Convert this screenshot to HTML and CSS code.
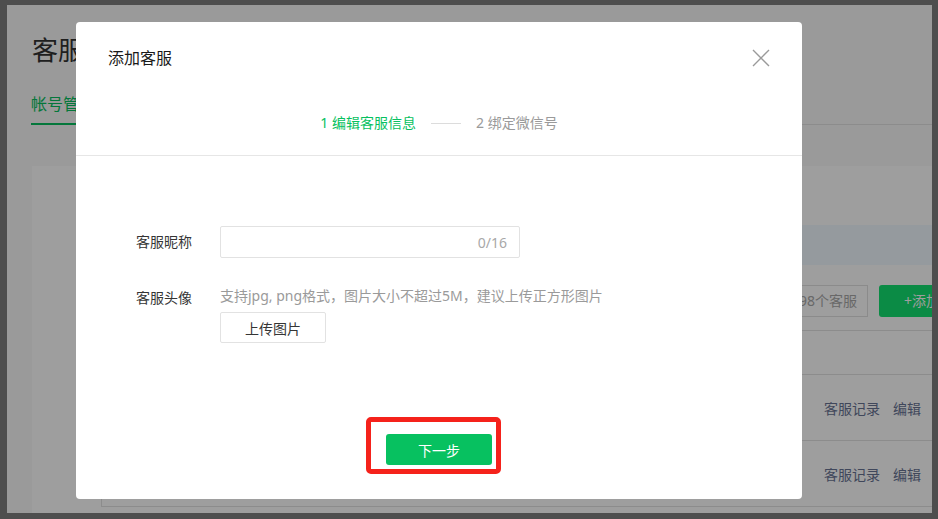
FILE: index.html
```html
<!DOCTYPE html>
<html lang="zh-CN">
<head>
<meta charset="utf-8">
<title>添加客服</title>
<link rel="stylesheet" href="styles.css">
</head>
<body>
<div class="frame">
  <div class="screen">
    <div class="page">
      <h1 class="page-title">客服</h1>
      <div class="tabs"><div class="tab active">帐号管理</div></div>
      <div class="card">
        <div class="table">
          <div class="card-top"></div>
          <div class="band"></div>
          <div class="toolbar">
            <div class="quota">还可添加98个客服</div>
            <div class="add-btn">+添加客服</div>
          </div>
          <div class="thead"></div>
          <div class="row"><span class="link">客服记录</span><span class="link">编辑</span></div>
          <div class="row"><span class="link">客服记录</span><span class="link">编辑</span></div>
        </div>
      </div>
    </div>
    <div class="mask"></div>
    <div class="dialog">
      <div class="dialog-head">
        <div class="dialog-title">添加客服</div>
        <div class="steps">
          <span class="step current">1 编辑客服信息</span>
          <span class="step-line"></span>
          <span class="step">2 绑定微信号</span>
        </div>
        <button class="close" aria-label="关闭">
          <svg width="18" height="18" viewBox="0 0 18 18"><path d="M1 1L17 17M17 1L1 17" stroke="#9a9a9a" stroke-width="1.4" fill="none"/></svg>
        </button>
      </div>
      <div class="dialog-body">
        <div class="form-row">
          <label class="form-label">客服昵称</label>
          <div class="input"><span class="counter">0/16</span></div>
        </div>
        <div class="form-row second">
          <label class="form-label tall">客服头像</label>
          <div class="field">
            <div class="hint">支持jpg, png格式，图片大小不超过5M，建议上传正方形图片</div>
            <button class="upload">上传图片</button>
          </div>
        </div>
      </div>
      <div class="dialog-foot">
        <div class="next-wrap">
          <button class="next">下一步</button>
          <span class="highlight"></span>
        </div>
      </div>
    </div>
  </div>
</div>
</body>
</html>
```
FILE: styles.css
```css
* { box-sizing: border-box; }
html, body { margin: 0; padding: 0; }
body {
  background: #4e4e4e;
  font-family: "Noto Sans", "Noto Sans CJK SC", sans-serif;
  font-size: 14px;
  color: #353535;
}
.frame {
  padding: 5px 6px 6px 7px;
  width: 938px;
  height: 519px;
}
.screen {
  position: relative;
  width: 925px;
  height: 508px;
  overflow: hidden;
  background: #f8f8f8;
}
.page {
  width: 1010px;
  padding: 27px 0 0 25px;
}
.page-title {
  margin: 0;
  font-size: 26px;
  line-height: 36px;
  font-weight: 400;
  color: #333;
}
.tabs {
  margin-top: 24px;
  display: flex;
  border-bottom: 1px solid #e3e3e3;
}
.tab {
  font-size: 16px;
  line-height: 24px;
  padding: 0 0 7px;
  margin-bottom: -1px;
}
.tab.active {
  color: #07c160;
  border-bottom: 2px solid #07c160;
  margin-left: -1px;
}
.card {
  margin-top: 41px;
  background: #fff;
  padding-left: 69px;
  height: 400px;
}
.table {
  border-left: 1px solid #e3e3e3;
}
.card-top { height: 59px; }
.band { height: 40px; background: #f0f8ff; }
.toolbar {
  display: flex;
  justify-content: flex-end;
  align-items: center;
  gap: 11px;
  padding: 20px 24px 13px 0;
  border-bottom: 1px solid #e3e3e3;
}
.quota {
  height: 32px;
  line-height: 30px;
  padding: 0 10px;
  border: 1px solid #e0e0e0;
  color: #a8a8a8;
  white-space: nowrap;
}
.add-btn {
  width: 114px;
  height: 32px;
  line-height: 32px;
  text-align: center;
  background: #12e070;
  color: #fff;
  border-radius: 3px;
  white-space: nowrap;
}
.thead { height: 44px; border-bottom: 1px solid #e3e3e3; }
.row {
  height: 66px;
  display: flex;
  justify-content: flex-end;
  align-items: center;
  gap: 13px;
  padding-right: 96px;
  border-bottom: 1px solid #e3e3e3;
}
.link { color: #687394; }
.mask {
  position: absolute;
  inset: 0;
  background: rgba(0, 0, 0, 0.38);
}
.dialog {
  position: absolute;
  left: 69px;
  top: 17px;
  width: 726px;
  height: 477px;
  background: #fff;
  border-radius: 4px;
  display: flex;
  flex-direction: column;
}
.dialog-head {
  position: relative;
  padding: 25px 32px 22px;
  border-bottom: 1px solid #e6e6e6;
}
.dialog-title {
  font-size: 16px;
  line-height: 22px;
  color: #1a1a1a;
}
.steps {
  margin-top: 44px;
  display: flex;
  justify-content: center;
  align-items: center;
  gap: 15px;
  line-height: 20px;
}
.step { color: #9a9a9a; }
.step.current { color: #07c160; }
.step-line {
  width: 30px;
  height: 1px;
  background: #dcdcdc;
}
.close {
  position: absolute;
  top: 27px;
  right: 32px;
  width: 18px;
  height: 18px;
  padding: 0;
  border: 0;
  background: none;
  display: flex;
}
.dialog-body {
  padding: 70px 0 0 60px;
}
.form-row {
  display: flex;
  align-items: flex-start;
}
.form-row.second { margin-top: 28px; }
.form-label {
  width: 84px;
  line-height: 32px;
  color: #353535;
}
.form-label.tall { line-height: 20px; padding-top: 2px; }
.input {
  width: 300px;
  height: 32px;
  border: 1px solid #e2e2e2;
  border-radius: 2px;
  display: flex;
  justify-content: flex-end;
  align-items: center;
  padding: 0 12px;
}
.counter { color: #a8a8a8; }
.hint {
  line-height: 20px;
  color: #9a9a9a;
}
.upload {
  display: block;
  margin-top: 6px;
  width: 106px;
  height: 31px;
  border: 1px solid #e2e2e2;
  border-radius: 2px;
  background: #fff;
  font: inherit;
  color: #353535;
  padding: 0;
}
.dialog-foot {
  margin-top: auto;
  padding-bottom: 34px;
  display: flex;
  justify-content: center;
}
.next-wrap { position: relative; display: flex; }
.next {
  width: 106px;
  height: 31px;
  border: 0;
  border-radius: 3px;
  background: #07c160;
  color: #fff;
  font: inherit;
  padding: 0;
}
.highlight {
  position: absolute;
  left: -20px;
  top: -17px;
  width: 135px;
  height: 57px;
  border: 5px solid #f5221b;
  border-radius: 5px;
  pointer-events: none;
}
```
